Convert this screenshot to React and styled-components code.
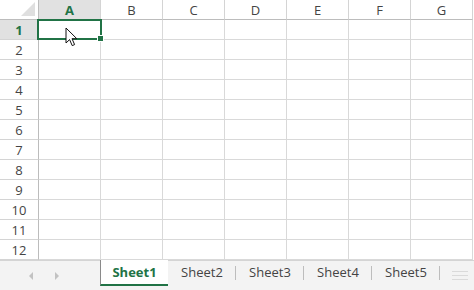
import React from "react";
import styled, { createGlobalStyle } from "styled-components";

const columns = ["A", "B", "C", "D", "E", "F", "G"];
const rows = Array.from({ length: 12 }, (_, i) => i + 1);
const sheets = ["Sheet1", "Sheet2", "Sheet3", "Sheet4", "Sheet5"];

const GlobalStyle = createGlobalStyle`
  html, body {
    margin: 0;
    padding: 0;
    background: #ffffff;
    overflow: hidden;
  }
  body {
    font-family: "Open Sans", "Noto Sans", "Liberation Sans", sans-serif;
  }
`;

const Workbook = styled.div`
  width: 474px;
  height: 290px;
  display: flex;
  flex-direction: column;
  background: #ffffff;
  overflow: hidden;
`;

const Grid = styled.div`
  display: grid;
  grid-template-columns: 39px repeat(7, 62px);
  grid-template-rows: 20px repeat(12, 20px);
  height: 260px;
`;

const Corner = styled.div`
  box-sizing: border-box;
  background: #ffffff;
  border-right: 1px solid #bcbcbc;
  border-bottom: 1px solid #bcbcbc;
  display: flex;
  align-items: flex-end;
  justify-content: flex-end;
  padding: 0 3px 3px 0;
`;

const Triangle = styled.div`
  width: 14px;
  height: 14px;
  background: #dfdfdf;
  clip-path: polygon(100% 0, 100% 100%, 0 100%);
`;

const ColHeader = styled.div`
  box-sizing: border-box;
  display: flex;
  align-items: center;
  justify-content: center;
  font-size: 13px;
  color: ${(p) => (p.$active ? "#217346" : "#444444")};
  font-weight: ${(p) => (p.$active ? 700 : 400)};
  background: ${(p) => (p.$active ? "#e1e1e1" : "#ffffff")};
  border-right: 1px solid #d4d4d4;
  border-bottom: 1px solid ${(p) => (p.$active ? "#217346" : "#bcbcbc")};
`;

const RowHeader = styled.div`
  box-sizing: border-box;
  display: flex;
  align-items: center;
  justify-content: center;
  font-size: 13px;
  color: ${(p) => (p.$active ? "#217346" : "#444444")};
  font-weight: ${(p) => (p.$active ? 700 : 400)};
  background: ${(p) => (p.$active ? "#e1e1e1" : "#ffffff")};
  border-right: 1px solid ${(p) => (p.$active ? "#217346" : "#bcbcbc")};
  border-bottom: 1px solid #d4d4d4;
`;

const Cell = styled.div`
  box-sizing: border-box;
  position: relative;
  border-right: 1px solid #d9d9d9;
  border-bottom: 1px solid #d9d9d9;
`;

const Selection = styled.div`
  position: absolute;
  left: -2px;
  top: -1px;
  right: -2px;
  bottom: -1px;
  border: 2px solid #217346;
  z-index: 2;
`;

const FillHandle = styled.div`
  position: absolute;
  right: -4px;
  bottom: -4px;
  width: 5px;
  height: 5px;
  background: #217346;
  border: 1px solid #ffffff;
`;

const Pointer = styled.svg`
  position: absolute;
  left: 26px;
  top: 7px;
  z-index: 3;
`;

const TabBar = styled.div`
  flex: 1;
  display: flex;
  align-items: stretch;
  background: #f3f3f3;
  border-top: 1px solid #d4d4d4;
`;

const ScrollArea = styled.div`
  width: 100px;
  display: flex;
  align-items: center;
  justify-content: center;
  gap: 22px;
  padding-right: 12px;
  box-sizing: border-box;
`;

const Arrow = styled.div`
  width: 0;
  height: 0;
  border-top: 4px solid transparent;
  border-bottom: 4px solid transparent;
  ${(p) =>
    p.$dir === "left"
      ? "border-right: 4px solid #c2c2c2;"
      : "border-left: 4px solid #c2c2c2;"}
`;

const Tab = styled.div`
  box-sizing: border-box;
  width: 68px;
  margin-top: -1px;
  margin-bottom: 4px;
  display: flex;
  align-items: center;
  justify-content: center;
  font-size: 13px;
  color: ${(p) => (p.$active ? "#217346" : "#444444")};
  font-weight: ${(p) => (p.$active ? 700 : 400)};
  background: ${(p) => (p.$active ? "#ffffff" : "transparent")};
  border-left: ${(p) => (p.$active ? "1px solid #8a8a8a" : "none")};
  border-bottom: ${(p) => (p.$active ? "2px solid #217346" : "2px solid transparent")};
  position: relative;

  &::after {
    content: "";
    position: absolute;
    right: 0;
    top: 6px;
    bottom: 4px;
    width: 1px;
    background: ${(p) => (p.$active ? "transparent" : "#bdbdbd")};
  }
`;

const Splitter = styled.div`
  margin-left: 12px;
  display: flex;
  flex-direction: column;
  justify-content: center;
  gap: 3px;

  span {
    display: block;
    width: 16px;
    height: 1px;
    background: #dadada;
  }
`;

const App = () => {
  return (
    <Workbook>
      <GlobalStyle />
      <Grid>
        <Corner>
          <Triangle />
        </Corner>
        {columns.map((c) => (
          <ColHeader key={c} $active={c === "A"}>
            {c}
          </ColHeader>
        ))}
        {rows.map((r) => (
          <React.Fragment key={r}>
            <RowHeader $active={r === 1}>{r}</RowHeader>
            {columns.map((c) => (
              <Cell key={c}>
                {r === 1 && c === "A" && (
                  <>
                    <Selection>
                      <FillHandle />
                    </Selection>
                    <Pointer width="13" height="20" viewBox="0 0 13 20">
                      <path
                        d="M1 1 L1 16 L4.6 12.6 L7.2 18.6 L9.6 17.6 L7 11.7 L11.8 11.7 Z"
                        fill="#ffffff"
                        stroke="#111111"
                        strokeWidth="1"
                        strokeLinejoin="round"
                      />
                    </Pointer>
                  </>
                )}
              </Cell>
            ))}
          </React.Fragment>
        ))}
      </Grid>
      <TabBar>
        <ScrollArea>
          <Arrow $dir="left" />
          <Arrow $dir="right" />
        </ScrollArea>
        {sheets.map((s) => (
          <Tab key={s} $active={s === "Sheet1"}>
            {s}
          </Tab>
        ))}
        <Splitter>
          <span />
          <span />
          <span />
        </Splitter>
      </TabBar>
    </Workbook>
  );
};

export default App;
